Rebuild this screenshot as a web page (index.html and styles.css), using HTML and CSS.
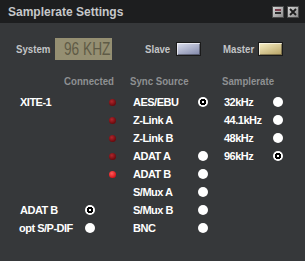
FILE: index.html
```html
<!DOCTYPE html>
<html lang="en">
<head>
  <meta charset="UTF-8">
  <title>Samplerate Settings</title>
  <link rel="stylesheet" href="styles.css">
</head>
<body>
  <div class="window">
    <div class="titlebar">
      <span class="title">Samplerate Settings</span>
      <div class="win-buttons">
        <button class="win-btn min"><span class="bar top"></span><span class="bar"></span></button>
        <button class="win-btn close">
          <svg width="8" height="8" viewBox="0 0 8 8"><path d="M1 1 L7 7 M7 1 L1 7" stroke="#1c1c1c" stroke-width="1.8"/></svg>
        </button>
      </div>
    </div>

    <div class="content">
      <div class="top-row">
        <span class="label system"><span class="narrow">System</span></span>
        <div class="lcd"><span class="lcd-text">96 KHZ</span></div>
        <span class="label slave-label"><span class="narrow">Slave</span></span>
        <button class="mode-btn slave"></button>
        <span class="label master-label"><span class="narrow">Master</span></span>
        <button class="mode-btn master"></button>
      </div>

      <div class="grid">
        <span class="head connected"><span class="narrow">Connected</span></span>
        <span class="head sync"><span class="narrow">Sync Source</span></span>
        <span class="head rate"><span class="narrow">Samplerate</span></span>

        <div class="row">
          <span class="name">XITE-1</span><span></span><span class="led"></span>
          <span class="src">AES/EBU</span><span class="radio on"></span>
          <span class="sr">32kHz</span><span class="radio"></span>
        </div>
        <div class="row">
          <span></span><span></span><span class="led"></span>
          <span class="src">Z-Link A</span><span></span>
          <span class="sr">44.1kHz</span><span class="radio"></span>
        </div>
        <div class="row">
          <span></span><span></span><span class="led"></span>
          <span class="src">Z-Link B</span><span></span>
          <span class="sr">48kHz</span><span class="radio"></span>
        </div>
        <div class="row">
          <span></span><span></span><span class="led"></span>
          <span class="src">ADAT A</span><span class="radio"></span>
          <span class="sr">96kHz</span><span class="radio on"></span>
        </div>
        <div class="row">
          <span></span><span></span><span class="led lit"></span>
          <span class="src">ADAT B</span><span class="radio"></span>
          <span></span><span></span>
        </div>
        <div class="row">
          <span></span><span></span><span></span>
          <span class="src">S/Mux A</span><span class="radio"></span>
          <span></span><span></span>
        </div>
        <div class="row">
          <span class="name">ADAT B</span><span class="radio on"></span><span></span>
          <span class="src">S/Mux B</span><span class="radio"></span>
          <span></span><span></span>
        </div>
        <div class="row">
          <span class="name opt">opt S/P-DIF</span><span class="radio"></span><span></span>
          <span class="src">BNC</span><span class="radio"></span>
          <span></span><span></span>
        </div>
      </div>
    </div>
  </div>
</body>
</html>
```

FILE: styles.css
```css
/* General Styles */
body {
  margin: 0;
  background: #36383a;
  font-family: 'Liberation Sans', Arial, sans-serif;
}

.window {
  width: 305px;
  height: 261px;
  background: #36383a;
  overflow: hidden;
}

/* Title bar */
.titlebar {
  height: 23px;
  background: #1d1e1f;
  display: flex;
  align-items: center;
  justify-content: space-between;
  padding: 0 6px 0 8px;
  box-sizing: border-box;
}

.title {
  color: #c6c8ca;
  font-size: 12px;
  font-weight: bold;
}

.win-buttons {
  display: flex;
  gap: 3px;
}

.win-btn {
  width: 12px;
  height: 12px;
  padding: 0;
  border: 1px solid #4a4a4a;
  background: linear-gradient(135deg, #d6d6d6, #8c8c8c);
  display: flex;
  flex-direction: column;
  align-items: center;
  justify-content: center;
  gap: 1px;
}

.win-btn .bar {
  width: 6px;
  height: 2px;
  background: #2a2a2a;
}

.win-btn .bar.top {
  background: #7a3e4c;
}

/* condensed look for labels and headers */
.narrow {
  display: inline-block;
  white-space: nowrap;
  transform: scaleX(0.84);
  transform-origin: left center;
}

/* System row */
.content {
  padding: 15px 0 0 16px;
}

.top-row {
  display: flex;
  align-items: center;
  height: 22px;
}

.label {
  font-weight: bold;
  font-size: 11.5px;
  color: #c2c4c6;
  white-space: nowrap;
}

.system {
  width: 39px;
}

.lcd {
  width: 57px;
  height: 22px;
  box-sizing: border-box;
  background: #958f72;
  color: #5f5b46;
  font-size: 18px;
  line-height: 22px;
  padding-left: 9px;
  white-space: nowrap;
  overflow: hidden;
}

.lcd-text {
  display: inline-block;
  transform: scaleX(0.76);
  transform-origin: left center;
}

.slave-label {
  margin-left: 33px;
  width: 31px;
}

.master-label {
  margin-left: 22px;
  width: 35px;
}

.mode-btn {
  width: 25px;
  height: 14px;
  padding: 0;
  border: 1px solid #1a1a1a;
  box-shadow: inset 1px 1px 0 rgba(255, 255, 255, 0.6), inset -1px -1px 0 rgba(0, 0, 0, 0.35);
}

.mode-btn.slave {
  background: linear-gradient(160deg, #dcdfee, #7f86a8);
}

.mode-btn.master {
  background: linear-gradient(160deg, #f8efc4, #b6a264);
}

/* Table */
.grid {
  display: grid;
  grid-template-columns: 66px 12px 32px 64px 22px 58px 12px;
  grid-template-rows: 20px repeat(8, 18px);
  margin-top: 13px;
  margin-left: 2px;
  align-items: center;
  color: #fff;
  font-size: 11px;
  font-weight: bold;
  letter-spacing: -0.5px;
}

.row {
  display: contents;
}

.head {
  font-size: 11.5px;
  color: #8e9092;
  letter-spacing: 0;
  align-self: start;
  padding-top: 2px;
  white-space: nowrap;
}

.connected {
  grid-column: 1 / 4;
  width: 47px;
  justify-self: end;
  margin-right: 17px;
}

.sync {
  grid-column: 4 / 6;
  margin-left: 2px;
}

.rate {
  grid-column: 6 / 8;
  margin-left: 8px;
}

.name {
  padding-left: 2px;
}

.opt {
  padding-left: 1px;
}

.src {
  padding-left: 5px;
}

.sr {
  padding-left: 10px;
}

.led {
  justify-self: center;
  width: 7px;
  height: 7px;
  border-radius: 50%;
  background: radial-gradient(circle at 40% 35%, #b0262c, #6a0a0e 70%);
}

.led.lit {
  background: radial-gradient(circle at 40% 35%, #ff5a5a, #d8151a 70%);
}

.radio {
  justify-self: center;
  width: 10px;
  height: 10px;
  border-radius: 50%;
  background: #fff;
}

.radio.on {
  background: radial-gradient(circle, #fff 0 1px, #000 1.5px 3px, #fff 3.5px);
}
```
